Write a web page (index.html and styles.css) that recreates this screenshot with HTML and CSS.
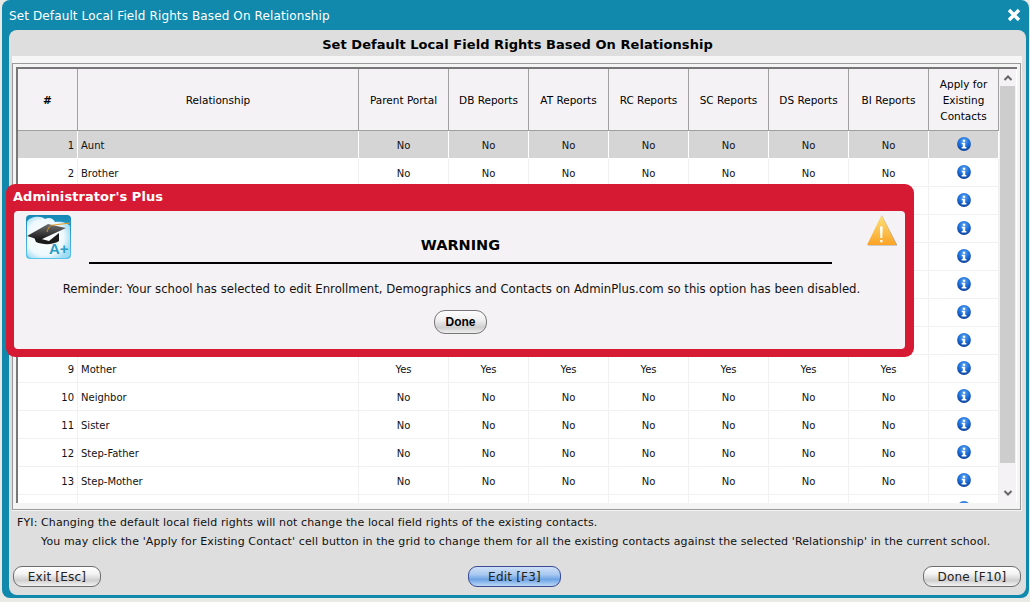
FILE: index.html
```html
<!DOCTYPE html>
<html lang="en">
<head>
<meta charset="utf-8">
<title>Set Default Local Field Rights Based On Relationship</title>
<link rel="stylesheet" href="styles.css">
</head>
<body>
<svg class="defs" width="0" height="0" aria-hidden="true">
  <defs>
    <radialGradient id="infoGrad" cx="50%" cy="30%" r="75%">
      <stop offset="0" stop-color="#5aa6f2"/>
      <stop offset="0.55" stop-color="#1b6ad6"/>
      <stop offset="1" stop-color="#0b3a8e"/>
    </radialGradient>
    <symbol id="info" viewBox="0 0 14 14">
      <circle cx="7" cy="7" r="6.900" fill="url(#infoGrad)"/>
      <rect x="5.800" y="2.700" width="2.400" height="2.100" fill="#fff"/>
      <path d="M4.700 5.800h3.500v4.100h1.200v1.500H4.700V9.900h1.100V7.300H4.700z" fill="#fff"/>
    </symbol>
  </defs>
</svg>
<div class="window">
  <header class="titlebar">
    <span class="titlebar-text">Set Default Local Field Rights Based On Relationship</span>
    <svg class="close" viewBox="0 0 14 14" width="14" height="14" aria-label="Close"><path d="M2 2l10 10M12 2L2 12" stroke="#fff" stroke-width="3.400" fill="none"/></svg>
  </header>
  <main class="panel">
    <h1 class="panel-title">Set Default Local Field Rights Based On Relationship</h1>
    <div class="grid-area">
      <div class="grid-frame">
        <div class="grid-scroll">
          <table class="grid">
            <colgroup>
              <col class="c-num"><col class="c-rel"><col class="c-pp">
              <col class="c-r"><col class="c-r"><col class="c-r"><col class="c-r"><col class="c-r"><col class="c-r"><col class="c-apply">
            </colgroup>
            <thead>
              <tr><th>#</th><th>Relationship</th><th>Parent Portal</th><th>DB Reports</th><th>AT Reports</th><th>RC Reports</th><th>SC Reports</th><th>DS Reports</th><th>BI Reports</th><th>Apply for<br>Existing<br>Contacts</th></tr>
            </thead>
            <tbody>
              <tr class="selected"><td class="num">1</td><td class="rel">Aunt</td><td>No</td><td>No</td><td>No</td><td>No</td><td>No</td><td>No</td><td>No</td><td><svg class="info"><use href="#info"/></svg></td></tr>
              <tr><td class="num">2</td><td class="rel">Brother</td><td>No</td><td>No</td><td>No</td><td>No</td><td>No</td><td>No</td><td>No</td><td><svg class="info"><use href="#info"/></svg></td></tr>
              <tr><td class="num"></td><td class="rel"></td><td></td><td></td><td></td><td></td><td></td><td></td><td></td><td><svg class="info"><use href="#info"/></svg></td></tr>
              <tr><td class="num"></td><td class="rel"></td><td></td><td></td><td></td><td></td><td></td><td></td><td></td><td><svg class="info"><use href="#info"/></svg></td></tr>
              <tr><td class="num"></td><td class="rel"></td><td></td><td></td><td></td><td></td><td></td><td></td><td></td><td><svg class="info"><use href="#info"/></svg></td></tr>
              <tr><td class="num"></td><td class="rel"></td><td></td><td></td><td></td><td></td><td></td><td></td><td></td><td><svg class="info"><use href="#info"/></svg></td></tr>
              <tr><td class="num"></td><td class="rel"></td><td></td><td></td><td></td><td></td><td></td><td></td><td></td><td><svg class="info"><use href="#info"/></svg></td></tr>
              <tr><td class="num"></td><td class="rel"></td><td></td><td></td><td></td><td></td><td></td><td></td><td></td><td><svg class="info"><use href="#info"/></svg></td></tr>
              <tr><td class="num">9</td><td class="rel">Mother</td><td>Yes</td><td>Yes</td><td>Yes</td><td>Yes</td><td>Yes</td><td>Yes</td><td>Yes</td><td><svg class="info"><use href="#info"/></svg></td></tr>
              <tr><td class="num">10</td><td class="rel">Neighbor</td><td>No</td><td>No</td><td>No</td><td>No</td><td>No</td><td>No</td><td>No</td><td><svg class="info"><use href="#info"/></svg></td></tr>
              <tr><td class="num">11</td><td class="rel">Sister</td><td>No</td><td>No</td><td>No</td><td>No</td><td>No</td><td>No</td><td>No</td><td><svg class="info"><use href="#info"/></svg></td></tr>
              <tr><td class="num">12</td><td class="rel">Step-Father</td><td>No</td><td>No</td><td>No</td><td>No</td><td>No</td><td>No</td><td>No</td><td><svg class="info"><use href="#info"/></svg></td></tr>
              <tr><td class="num">13</td><td class="rel">Step-Mother</td><td>No</td><td>No</td><td>No</td><td>No</td><td>No</td><td>No</td><td>No</td><td><svg class="info"><use href="#info"/></svg></td></tr>
              <tr><td class="num"></td><td class="rel"></td><td></td><td></td><td></td><td></td><td></td><td></td><td></td><td><svg class="info"><use href="#info"/></svg></td></tr>
            </tbody>
          </table>
          <div class="scrollbar">
            <svg class="arrow" viewBox="0 0 10 6" width="10" height="6"><path d="M1.500 5L5 1.500 8.500 5" stroke="#666" stroke-width="2" fill="none"/></svg>
            <div class="thumb"></div>
            <svg class="arrow arrow-down" viewBox="0 0 10 6" width="10" height="6"><path d="M1.500 1L5 4.500 8.500 1" stroke="#666" stroke-width="2" fill="none"/></svg>
          </div>
        </div>
      </div>
    </div>
    <div class="notes">
      <div class="note-row"><span class="fyi">FYI:</span><span>Changing the default local field rights will not change the local field rights of the existing contacts.</span></div>
      <div class="note-row"><span class="fyi"></span><span>You may click the 'Apply for Existing Contact' cell button in the grid to change them for all the existing contacts against the selected 'Relationship' in the current school.</span></div>
    </div>
    <footer class="actions">
      <button class="btn btn-grey" type="button">Exit [Esc]</button>
      <button class="btn btn-blue" type="button">Edit [F3]</button>
      <button class="btn btn-grey" type="button">Done [F10]</button>
    </footer>
  </main>
</div>

<section class="alert">
  <h2 class="alert-title">Administrator's Plus</h2>
  <div class="alert-body">
    <svg class="logo" viewBox="0 0 45 44" width="45" height="44" aria-hidden="true">
      <defs>
        <linearGradient id="logoBg" x1="0" y1="0" x2="0" y2="1">
          <stop offset="0" stop-color="#1487b5"/>
          <stop offset="1" stop-color="#5cc5ea"/>
        </linearGradient>
        <radialGradient id="cloud" cx="42%" cy="50%" r="62%">
          <stop offset="0" stop-color="#ffffff"/>
          <stop offset="0.7" stop-color="#eef9fd"/>
          <stop offset="1" stop-color="#9fdcf3"/>
        </radialGradient>
        <linearGradient id="cap" x1="0" y1="0" x2="0" y2="1">
          <stop offset="0" stop-color="#707070"/>
          <stop offset="1" stop-color="#161616"/>
        </linearGradient>
      </defs>
      <rect width="45" height="44" rx="4" fill="url(#logoBg)"/>
      <path d="M1 7c2-5 13-7 18-3 4-2 8-1 10 3 5-1 12 0 15 4v29c-1 2-3 3-5 3H6c-3 0-5-2-5-5z" fill="url(#cloud)"/>
      <path d="M8 22l15 4 10-8v8c-6 4-16 4-23 1z" fill="#1b1b1b"/>
      <path d="M1 21L22 9l18 4-26 12z" fill="url(#cap)"/>
      <path d="M21 17c1-4 3-7 7-7l16-2" stroke="#e39a26" stroke-width="1" fill="none"/>
      <text x="23" y="39" class="logo-text">A+</text>
    </svg>
    <svg class="warn" viewBox="0 0 32 32" width="32" height="32" aria-hidden="true">
      <defs>
        <linearGradient id="warnGrad" x1="0" y1="0" x2="0" y2="1">
          <stop offset="0" stop-color="#fde17a"/>
          <stop offset="1" stop-color="#fba325"/>
        </linearGradient>
      </defs>
      <path d="M17 0.500L32.500 30.500H3z" fill="#a8a29a"/>
      <path d="M16.500 0L31.500 30H2z" fill="url(#warnGrad)"/>
      <path d="M15 11.500h2.700l-.4 11.500h-1.900z" fill="#fff"/>
      <rect x="15.200" y="25" width="2.300" height="2.300" fill="#fff"/>
    </svg>
    <h3 class="alert-heading">WARNING</h3>
    <p class="alert-text">Reminder: Your school has selected to edit Enrollment, Demographics and Contacts on AdminPlus.com so this option has been disabled.</p>
    <button class="btn-done" type="button">Done</button>
  </div>
</section>
</body>
</html>
```

FILE: styles.css
```css
* { box-sizing: border-box; }
html, body { margin: 0; padding: 0; height: 100%; }
body {
  width: 1030px;
  height: 602px;
  overflow: hidden;
  background: #e9e9e6;
  font-family: "DejaVu Sans", Verdana, sans-serif;
  font-size: 10px;
  color: #111;
  position: relative;
}
.defs { position: absolute; }

.window {
  width: 1027px;
  height: 598px;
  margin-left: 2px;
  background: #1089ad;
  border-radius: 8px;
  padding: 0 3px 3px 7px;
  display: flex;
  flex-direction: column;
}
.titlebar {
  height: 30px;
  flex: none;
  display: flex;
  align-items: center;
  justify-content: space-between;
  padding: 0 5px 0 0;
  color: #fff;
}
.titlebar-text { font-size: 12px; letter-spacing: 0.12px; margin-top: 1px; }

.panel {
  flex: 1;
  min-height: 0;
  background: #dedede;
  border-radius: 8px;
  display: flex;
  flex-direction: column;
}
.panel-title {
  margin: 0;
  height: 26px;
  flex: none;
  font-size: 13px;
  letter-spacing: 0.06px;
  font-weight: bold;
  line-height: 30px;
  text-align: center;
  color: #000;
}
.grid-area {
  margin: 0 4px 0 3px;
  height: 455px;
  flex: none;
  background: #f6f6f6;
  padding: 7px 1px 0 0;
}
.grid-frame {
  height: 447px;
  border: 1px solid #9a9a9a;
  padding: 3px 3px 0 3px;
  background: #f4f4f4;
}
.grid-scroll {
  height: 436px;
  overflow: hidden;
  border-top: 2px solid #777;
  border-left: 2px solid #777;
  background: #fff;
  display: flex;
}
.grid {
  flex: none;
  width: 981px;
  border-collapse: separate;
  border-spacing: 0;
  table-layout: fixed;
  align-self: flex-start;
}
.c-num { width: 60px; }
.c-rel { width: 281px; }
.c-pp { width: 90px; }
.c-r { width: 80px; }
.c-apply { width: 70px; }
.grid th {
  height: 62px;
  background: #f5f2f6;
  font-weight: normal;
  font-size: 10.500px;
  line-height: 16px;
  border-right: 1px solid #a0a0a0;
  border-bottom: 1px solid #a0a0a0;
  text-align: center;
  padding: 0;
  color: #000;
}
.grid th:first-child { font-weight: bold; }
.grid td {
  height: 28px;
  padding: 1px 0 0;
  text-align: center;
  border-right: 1px solid #f3f0f4;
  border-bottom: 1px solid #f3f0f4;
  background: #fff;
  vertical-align: middle;
}
.grid .selected td { background: #d5d5d5; border-bottom-color: #fff; border-right-color: #fff; }
.grid td.num { text-align: right; padding-right: 3px; }
.grid td.rel { text-align: left; padding-left: 3px; }
.info { width: 14px; height: 14px; display: block; margin: -3px auto 0; }

.scrollbar {
  flex: none;
  width: 17px;
  background: #f5f2f6;
  display: flex;
  flex-direction: column;
  align-items: center;
  padding: 6px 0 7px;
}
.thumb { width: 15px; height: 377px; flex: none; background: #cdcdcd; margin-top: 5px; }
.arrow { flex: none; }
.arrow-down { margin-top: auto; }

.notes {
  padding: 2px 0 0 8px;
  font-size: 11px;
  letter-spacing: 0.12px;
  line-height: 19px;
  color: #111;
}
.note-row { display: flex; }
.fyi { width: 24px; flex: none; }

.actions {
  margin-top: auto;
  padding: 0 5px 8px 4px;
  display: flex;
  justify-content: space-between;
  align-items: center;
}
.btn {
  height: 21px;
  padding: 0;
  border-radius: 9px;
  font-family: inherit;
  font-size: 12px;
  letter-spacing: 0.2px;
  color: #222;
  border: 1px solid #6e6e6e;
}
.btn-grey {
  width: 88px;
  background: linear-gradient(#ffffff 0%, #f4f4f4 35%, #cfcfcf 70%, #f2f2f2 100%);
}
.actions .btn-grey:last-child { width: 98px; }
.btn-blue {
  width: 93px;
  margin-left: 5px;
  border-color: #3a4a94;
  background: linear-gradient(#cfe0f7 0%, #a7c8f0 40%, #6da3e6 65%, #bcd7f5 100%);
}

.alert {
  position: absolute;
  left: 6px;
  top: 184px;
  width: 908px;
  height: 173px;
  background: #d71a33;
  border-radius: 9px;
  padding: 0 9px 8px 8px;
  display: flex;
  flex-direction: column;
}
.alert-title {
  margin: 0 0 0 -1px;
  height: 27px;
  flex: none;
  font-size: 13px;
  letter-spacing: 0.05px;
  font-weight: bold;
  line-height: 26px;
  color: #fff;
}
.alert-body {
  flex: 1;
  background: #f5f2f6;
  border-radius: 4px;
  position: relative;
  text-align: center;
  display: flex;
  flex-direction: column;
  align-items: center;
}
.logo { position: absolute; left: 12px; top: 4px; }
.logo-text { font-family: "Liberation Sans", sans-serif; font-size: 15px; font-weight: bold; fill: #2a9cc8; }
.warn { position: absolute; right: 8px; top: 4px; }
.alert-heading {
  margin: 23px 0 0 2px;
  width: 743px;
  height: 30px;
  font-size: 14.500px;
  line-height: 22px;
  font-weight: bold;
  color: #000;
  border-bottom: 2px solid #000;
}
.alert-text {
  margin: 17px 0 0 4px;
  font-size: 11.700px;
  line-height: 16px;
  color: #111;
}
.btn-done {
  margin: 13px 0 0 2px;
  width: 53px;
  height: 24px;
  border: 1px solid #777;
  border-radius: 11px;
  background: linear-gradient(#fdfdfd 0%, #f0f0f0 40%, #cfcfcf 75%, #efefef 100%);
  font-family: "Liberation Sans", sans-serif;
  font-weight: bold;
  font-size: 12px;
  color: #000;
  padding: 0;
}
```
